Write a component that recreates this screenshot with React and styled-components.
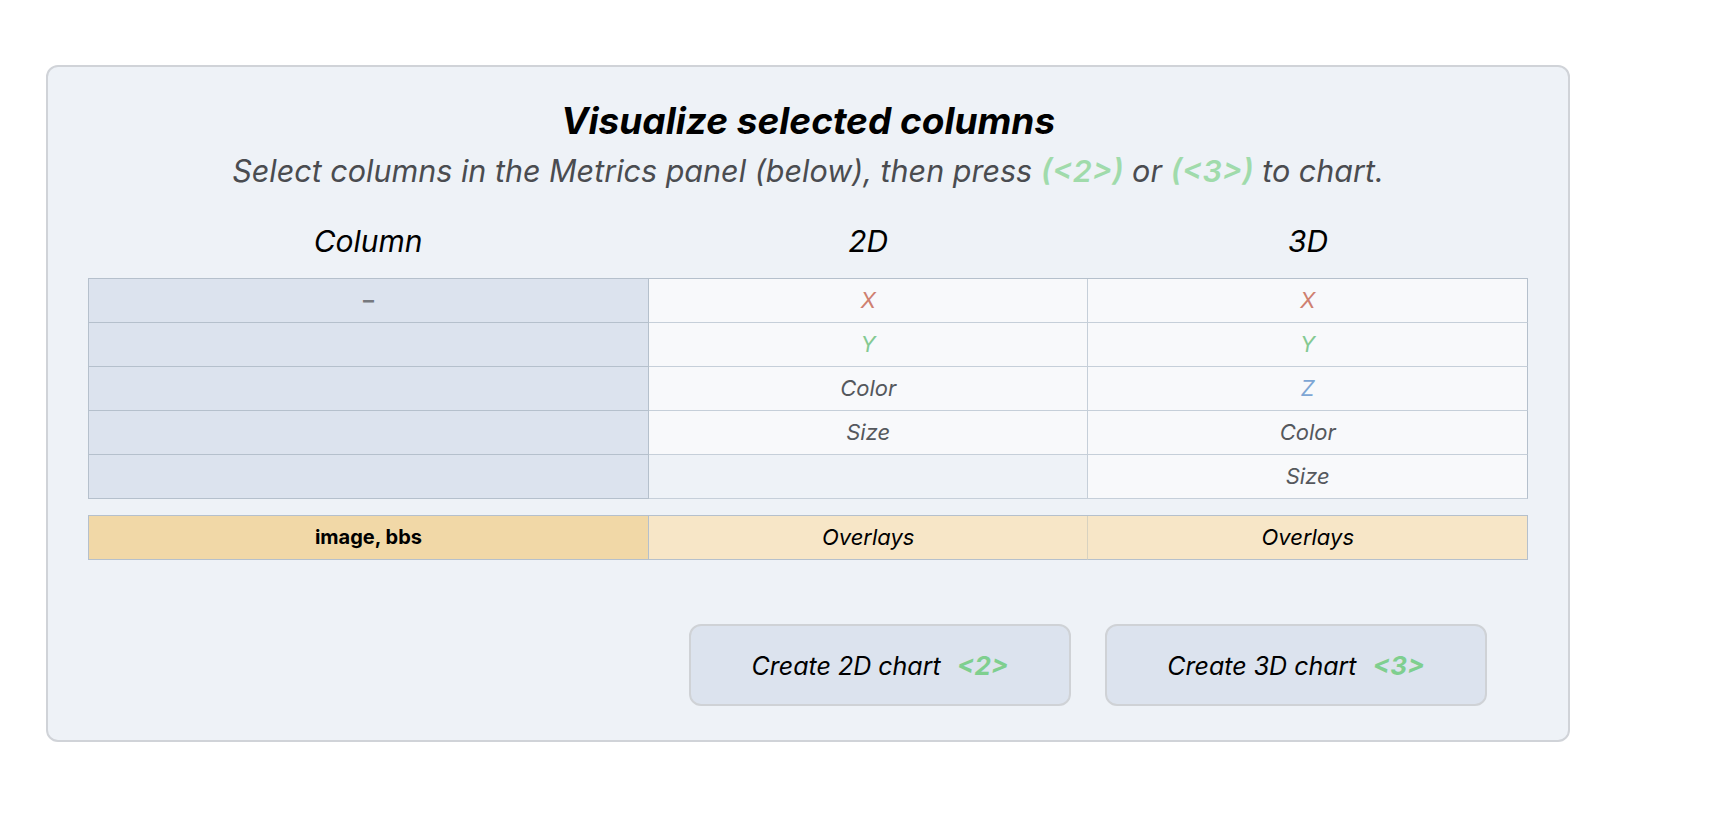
import React from 'react'
import styled, { createGlobalStyle } from 'styled-components'

const GlobalStyle = createGlobalStyle`
  body {
    margin: 0;
    background: #ffffff;
    font-family: Inter, "Liberation Sans", sans-serif;
  }
`;

const rows2d = [
  { label: 'X', tone: 'x' },
  { label: 'Y', tone: 'y' },
  { label: 'Color' },
  { label: 'Size' },
  null,
];

const rows3d = [
  { label: 'X', tone: 'x' },
  { label: 'Y', tone: 'y' },
  { label: 'Z', tone: 'z' },
  { label: 'Color' },
  { label: 'Size' },
];

const tones = {
  x: '#cf8070',
  y: '#84c992',
  z: '#7ea6d4',
};

export default function App() {
  return (
    <>
      <GlobalStyle />
      <Page>
        <Panel>
          <Title>Visualize selected columns</Title>
          <Subtitle>
            Select columns in the Metrics panel (below), then press <Key>(&lt;2&gt;)</Key> or{' '}
            <Key>(&lt;3&gt;)</Key> to chart.
          </Subtitle>

          <HeaderRow>
            <HeaderCell>Column</HeaderCell>
            <HeaderCell>2D</HeaderCell>
            <HeaderCell>3D</HeaderCell>
          </HeaderRow>

          <Grid>
            {rows3d.map((r3, i) => {
              const r2 = rows2d[i];
              return (
                <React.Fragment key={i}>
                  <ColumnCell>{i === 0 ? <Dash>–</Dash> : null}</ColumnCell>
                  <RoleCell $empty={!r2} $tone={r2 && r2.tone}>
                    {r2 ? r2.label : ''}
                  </RoleCell>
                  <RoleCell $tone={r3.tone}>{r3.label}</RoleCell>
                </React.Fragment>
              );
            })}
          </Grid>

          <OverlayGrid>
            <OverlayName>image, bbs</OverlayName>
            <OverlayCell>Overlays</OverlayCell>
            <OverlayCell>Overlays</OverlayCell>
          </OverlayGrid>

          <Actions>
            <ChartButton>
              Create 2D chart <ButtonKey>&lt;2&gt;</ButtonKey>
            </ChartButton>
            <ChartButton>
              Create 3D chart <ButtonKey>&lt;3&gt;</ButtonKey>
            </ChartButton>
          </Actions>
        </Panel>
      </Page>
    </>
  )
}

const Page = styled.div`
  padding: 65px 0 0 46px;
`;

const Panel = styled.div`
  box-sizing: border-box;
  width: 1524px;
  padding: 32px 40px 34px;
  background: #eef2f7;
  border: 2px solid #d0d3d8;
  border-radius: 12px;
  display: flex;
  flex-direction: column;
`;

const Title = styled.h2`
  margin: 0;
  text-align: center;
  font-size: 37px;
  line-height: 44px;
  font-weight: 700;
  font-style: italic;
  color: #000;
`;

const Subtitle = styled.p`
  margin: 10px 0 0;
  text-align: center;
  font-size: 30.5px;
  line-height: 36px;
  font-style: italic;
  color: #4a4c50;
`;

const Key = styled.span`
  color: #a0dbab;
  font-weight: 600;
`;

const columns = `
  display: grid;
  grid-template-columns: 560.5fr 440fr 440fr;
`;

const HeaderRow = styled.div`
  ${columns}
  margin-top: 34px;
`;

const HeaderCell = styled.div`
  text-align: center;
  font-size: 30px;
  line-height: 36px;
  font-style: italic;
  color: #000;
`;

const Grid = styled.div`
  ${columns}
  margin-top: 19px;
  border-top: 1px solid #b5c0cc;
  border-left: 1px solid #b5c0cc;
`;

const Cell = styled.div`
  box-sizing: border-box;
  height: 44px;
  padding-bottom: 2px;
  display: flex;
  align-items: center;
  justify-content: center;
  border-right: 1px solid #c6cfd9;
  border-bottom: 1px solid #c6cfd9;
  font-size: 22px;
  font-style: italic;
`;

const ColumnCell = styled(Cell)`
  background: #dce3ee;
  border-bottom-color: #b5c0cc;
  border-right-color: #b5c0cc;
`;

const Dash = styled.span`
  font-style: normal;
  font-weight: 700;
  color: #76797e;
`;

const RoleCell = styled(Cell)`
  background: ${p => (p.$empty ? '#eef2f7' : '#f8f9fb')};
  color: ${p => (p.$tone ? tones[p.$tone] : '#55585d')};
  &:nth-child(3n) {
    border-right-color: #b5c0cc;
  }
`;

const OverlayGrid = styled(Grid)`
  margin-top: 16px;
`;

const OverlayName = styled(Cell)`
  background: #f1d8a7;
  border-color: #b5c0cc;
  font-size: 20px;
  font-weight: 700;
  font-style: normal;
  color: #000;
`;

const OverlayCell = styled(Cell)`
  background: #f7e6c7;
  border-right-color: #d8d2c0;
  border-bottom-color: #b5c0cc;
  color: #000;
  &:last-child {
    border-right-color: #b5c0cc;
  }
`;

const Actions = styled.div`
  display: flex;
  justify-content: flex-end;
  gap: 34px;
  margin-top: 64px;
  padding-right: 41px;
`;

const ChartButton = styled.button`
  box-sizing: border-box;
  width: 382px;
  height: 82px;
  background: #dce3ee;
  border: 2px solid #cfd2d6;
  border-radius: 12px;
  font-family: Inter, "Liberation Sans", sans-serif;
  font-size: 25px;
  font-style: italic;
  color: #000;
  cursor: pointer;
  white-space: pre;
`;

const ButtonKey = styled.span`
  margin-left: 9px;
  font-size: 26px;
  color: #7fcf8f;
  font-weight: 700;
`;
